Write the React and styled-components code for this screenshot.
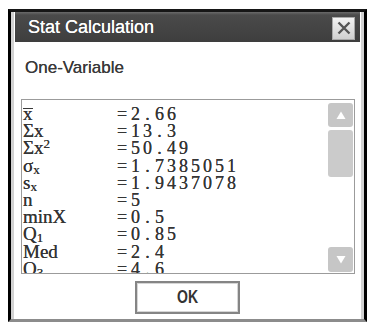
import styled, { createGlobalStyle } from 'styled-components';

const GlobalStyle = createGlobalStyle`
  html, body {
    margin: 0;
    padding: 0;
    background: #fff;
  }
  body {
    padding: 9px 0 0 8px;
  }
`;

const Frame = styled.div`
  width: 359px;
  box-sizing: border-box;
  border-top: 3px solid #161616;
  border-left: 3px solid #000;
  border-right: 3px solid #000;
  border-bottom: 3px solid #8c8c8c;
`;

const Inner = styled.div`
  border-left: 3px solid #d2d2d2;
  border-right: 3px solid #d2d2d2;
  padding: 0 1px;
  background: #fff;
  display: flex;
  flex-direction: column;
`;

const TitleBar = styled.div`
  height: 30px;
  display: flex;
  align-items: center;
  justify-content: space-between;
  padding-left: 13px;
  background: linear-gradient(#6a6a6a 0px, #4a4a4a 3px, #3e3e3e 100%);
`;

const Title = styled.span`
  font-family: "Liberation Sans", Arial, sans-serif;
  font-size: 18px;
  color: #fff;
  padding-top: 1px;
  text-shadow: 0 0 0.6px #fff;
`;

const CloseButton = styled.div`
  width: 23px;
  height: 23px;
  margin: 2px 5px 0 0;
  box-sizing: border-box;
  display: flex;
  align-items: center;
  justify-content: center;
  background: linear-gradient(#f2f2f2, #d0d0d0);
  border: 1px solid #a8a8a8;
`;

const Body = styled.div`
  display: flex;
  flex-direction: column;
  padding: 16px 0 5px;
`;

const Subtitle = styled.div`
  font-family: "Liberation Sans", Arial, sans-serif;
  font-size: 17px;
  line-height: 20px;
  height: 20px;
  color: #3a3a3a;
  padding-left: 10px;
  text-shadow: 0 0 0.4px #3a3a3a;
`;

const ListBox = styled.div`
  margin: 21px 5px 0 6px;
  height: 175px;
  box-sizing: border-box;
  border: 1px solid #9b9b9b;
  display: flex;
`;

const Rows = styled.div`
  flex: 1;
  overflow: hidden;
  padding: 5px 0 0 1px;
`;

const Row = styled.div`
  display: flex;
  align-items: baseline;
  height: 17.2px;
  line-height: 17.2px;
  white-space: nowrap;
  color: #353535;
  font-family: "Liberation Serif", "Times New Roman", serif;
  text-shadow: 0 0 0.3px #353535;
`;

const Label = styled.span`
  width: 94px;
  flex: none;
  font-size: 19px;
`;

const Sub = styled.span`
  font-size: 13px;
  position: relative;
  top: 2px;
`;

const Sup = styled.span`
  font-size: 13px;
  position: relative;
  top: -6px;
`;

const Bar = styled.span`
  display: inline-block;
  border-top: 1.3px solid #383838;
  line-height: 10px;
`;

const Value = styled.span`
  font-size: 18px;
`;

const Eq = styled.span`
  display: inline-block;
  width: 12.5px;
`;

const Cell = styled.span`
  display: inline-block;
  width: 12px;
  text-align: center;
`;

const ScrollBar = styled.div`
  width: 25px;
  flex: none;
  padding: 3px 1px 1px 0;
  display: flex;
  flex-direction: column;
`;

const ArrowButton = styled.div`
  height: ${(p) => p.$h}px;
  border-radius: 3px;
  background: #c6c6c6;
  display: flex;
  align-items: center;
  justify-content: center;
`;

const Thumb = styled.div`
  margin-top: 3px;
  height: 47px;
  border-radius: 3px;
  background: #cbcbcb;
`;

const Track = styled.div`
  flex: 1;
`;

const Footer = styled.div`
  display: flex;
  justify-content: center;
  margin-top: 7px;
`;

const OkButton = styled.div`
  width: 105px;
  height: 33px;
  box-sizing: border-box;
  border: 2px solid #858585;
  box-shadow: inset 0 0 0 1px #d6d6d6;
  background: #fff;
  display: flex;
  align-items: center;
  justify-content: center;
`;

const OkLabel = styled.span`
  display: inline-block;
  font-family: "Liberation Sans", Arial, sans-serif;
  font-weight: bold;
  font-size: 18px;
  color: #333;
  transform: scaleX(0.78);
`;

const Digits = ({ text }) => (
  <>
    {text.split('').map((ch, i) => (
      <Cell key={i}>{ch}</Cell>
    ))}
  </>
);

const stats = [
  { label: <Bar>x</Bar>, value: '2.66' },
  { label: <>Σx</>, value: '13.3' },
  { label: <>Σx<Sup>2</Sup></>, value: '50.49' },
  { label: <>σ<Sub>x</Sub></>, value: '1.7385051' },
  { label: <>s<Sub>x</Sub></>, value: '1.9437078' },
  { label: <>n</>, value: '5' },
  { label: <>minX</>, value: '0.5' },
  { label: <>Q<Sub>1</Sub></>, value: '0.85' },
  { label: <>Med</>, value: '2.4' },
  { label: <>Q<Sub>3</Sub></>, value: '4.6' },
];

const Triangle = ({ down }) => (
  <svg width="10" height="9" viewBox="0 0 10 9">
    <polygon points={down ? '0.5,1 9.5,1 5,8.5' : '5,0.5 9.5,8 0.5,8'} fill="#fff" />
  </svg>
);

export default function App() {
  return (
    <>
      <GlobalStyle />
      <Frame>
        <Inner>
          <TitleBar>
            <Title>Stat Calculation</Title>
            <CloseButton>
              <svg width="14" height="14" viewBox="0 0 14 14">
                <path d="M1.5 1.5 L12.5 12.5 M12.5 1.5 L1.5 12.5" stroke="#555" strokeWidth="2.4" />
              </svg>
            </CloseButton>
          </TitleBar>
          <Body>
            <Subtitle>One-Variable</Subtitle>
            <ListBox>
              <Rows>
                {stats.map((s, i) => (
                  <Row key={i}>
                    <Label>{s.label}</Label>
                    <Value>
                      <Eq>=</Eq>
                      <Digits text={s.value} />
                    </Value>
                  </Row>
                ))}
              </Rows>
              <ScrollBar>
                <ArrowButton $h={24}>
                  <Triangle />
                </ArrowButton>
                <Thumb />
                <Track />
                <ArrowButton $h={25}>
                  <Triangle down />
                </ArrowButton>
              </ScrollBar>
            </ListBox>
            <Footer>
              <OkButton>
                <OkLabel>OK</OkLabel>
              </OkButton>
            </Footer>
          </Body>
        </Inner>
      </Frame>
    </>
  );
}
